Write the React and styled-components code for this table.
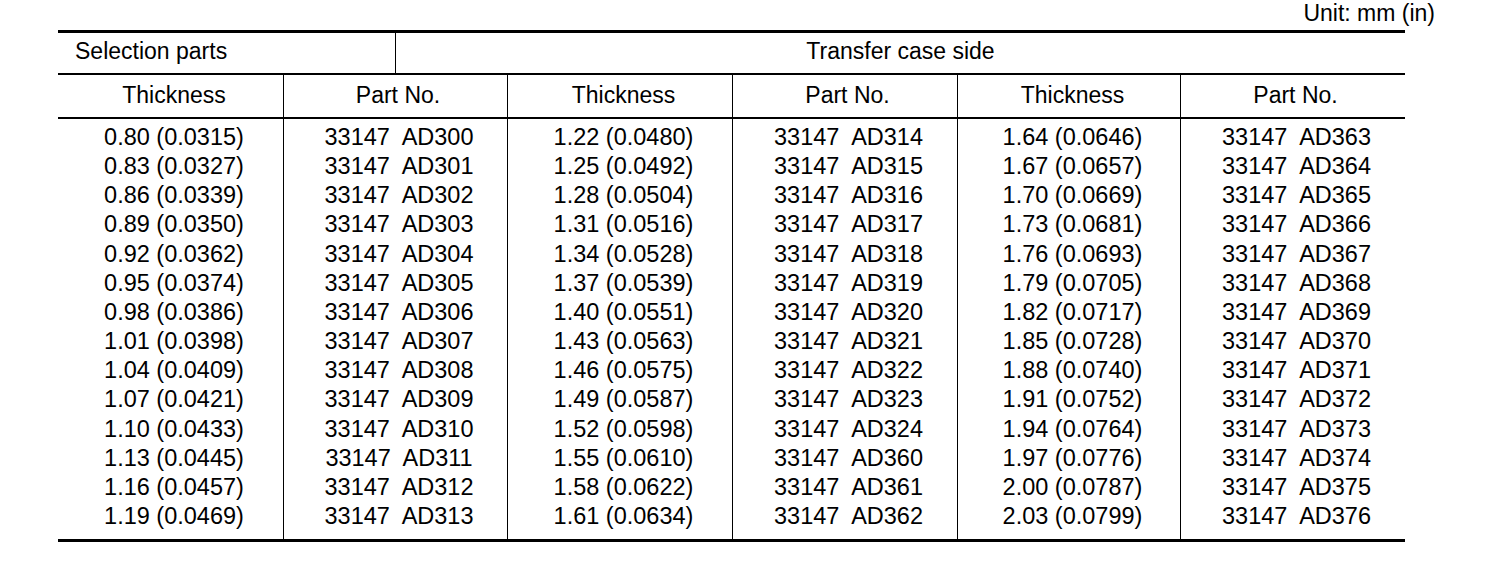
import React from "react";
import styled, { createGlobalStyle } from "styled-components";

const Global = createGlobalStyle`
  html, body { margin: 0; padding: 0; background: #fff; }
  body { font-family: "Liberation Sans", Arial, sans-serif; color: #000; }
`;

const Page = styled.div`
  width: 1504px;
  height: 582px;
  padding: 2px 0 0 58px;
  box-sizing: border-box;
  background: #fff;
`;

const Wrap = styled.div`
  width: 1377px;
  display: flex;
  flex-direction: column;
`;

const Unit = styled.div`
  align-self: flex-end;
  font-size: 23px;
  line-height: 22px;
  height: 28px;
`;

const Table = styled.div`
  width: 1347px;
  border-top: 3px solid #000;
  border-bottom: 3px solid #000;
`;

const TopHeader = styled.div`
  display: grid;
  grid-template-columns: 338px 1fr;
  height: 40px;
  border-bottom: 2px solid #000;
`;

const TopCell = styled.div`
  display: flex;
  align-items: center;
  font-size: 23px;
  justify-content: ${(p) => (p.$left ? "flex-start" : "center")};
  padding-left: ${(p) => (p.$left ? "17px" : "0")};
  padding-bottom: 4px;
  border-right: ${(p) => (p.$divider ? "1px solid #000" : "none")};
`;

const Grid = styled.div`
  display: grid;
  grid-template-columns: 226px 224px 225px 225px 223px 224px;
`;

const HeadRow = styled(Grid)`
  height: 42px;
  border-bottom: 2px solid #000;
`;

const HeadCell = styled.div`
  display: flex;
  align-items: center;
  justify-content: center;
  padding-left: ${(p) => (p.$part ? "5px" : "7px")};
  padding-bottom: 1px;
  font-size: 23px;
  border-right: ${(p) => (p.$last ? "none" : "1px solid #000")};
`;

const Body = styled(Grid)`
  height: 420px;
`;

const Column = styled.div`
  display: flex;
  flex-direction: column;
  align-items: center;
  padding: 4px 0 0 7px;
  border-right: ${(p) => (p.$last ? "none" : "1px solid #000")};
`;

const Value = styled.div`
  font-size: 23.5px;
  line-height: 29.15px;
  white-space: pre;
`;

const t1 = ["0.80 (0.0315)","0.83 (0.0327)","0.86 (0.0339)","0.89 (0.0350)","0.92 (0.0362)","0.95 (0.0374)","0.98 (0.0386)","1.01 (0.0398)","1.04 (0.0409)","1.07 (0.0421)","1.10 (0.0433)","1.13 (0.0445)","1.16 (0.0457)","1.19 (0.0469)"];
const p1 = ["300","301","302","303","304","305","306","307","308","309","310","311","312","313"];
const t2 = ["1.22 (0.0480)","1.25 (0.0492)","1.28 (0.0504)","1.31 (0.0516)","1.34 (0.0528)","1.37 (0.0539)","1.40 (0.0551)","1.43 (0.0563)","1.46 (0.0575)","1.49 (0.0587)","1.52 (0.0598)","1.55 (0.0610)","1.58 (0.0622)","1.61 (0.0634)"];
const p2 = ["314","315","316","317","318","319","320","321","322","323","324","360","361","362"];
const t3 = ["1.64 (0.0646)","1.67 (0.0657)","1.70 (0.0669)","1.73 (0.0681)","1.76 (0.0693)","1.79 (0.0705)","1.82 (0.0717)","1.85 (0.0728)","1.88 (0.0740)","1.91 (0.0752)","1.94 (0.0764)","1.97 (0.0776)","2.00 (0.0787)","2.03 (0.0799)"];
const p3 = ["363","364","365","366","367","368","369","370","371","372","373","374","375","376"];

const part = (s) => `33147  AD${s}`;

const columns = [t1, p1.map(part), t2, p2.map(part), t3, p3.map(part)];
const heads = ["Thickness", "Part No.", "Thickness", "Part No.", "Thickness", "Part No."];

export default function App() {
  return (
    <>
      <Global />
      <Page>
        <Wrap>
          <Unit>Unit: mm (in)</Unit>
          <Table>
            <TopHeader>
              <TopCell $left $divider>Selection parts</TopCell>
              <TopCell>Transfer case side</TopCell>
            </TopHeader>
            <HeadRow>
              {heads.map((h, i) => (
                <HeadCell key={i} $part={i % 2 === 1} $last={i === heads.length - 1}>{h}</HeadCell>
              ))}
            </HeadRow>
            <Body>
              {columns.map((col, i) => (
                <Column key={i} $last={i === columns.length - 1}>
                  {col.map((v, j) => (
                    <Value key={j}>{v}</Value>
                  ))}
                </Column>
              ))}
            </Body>
          </Table>
        </Wrap>
      </Page>
    </>
  );
}
